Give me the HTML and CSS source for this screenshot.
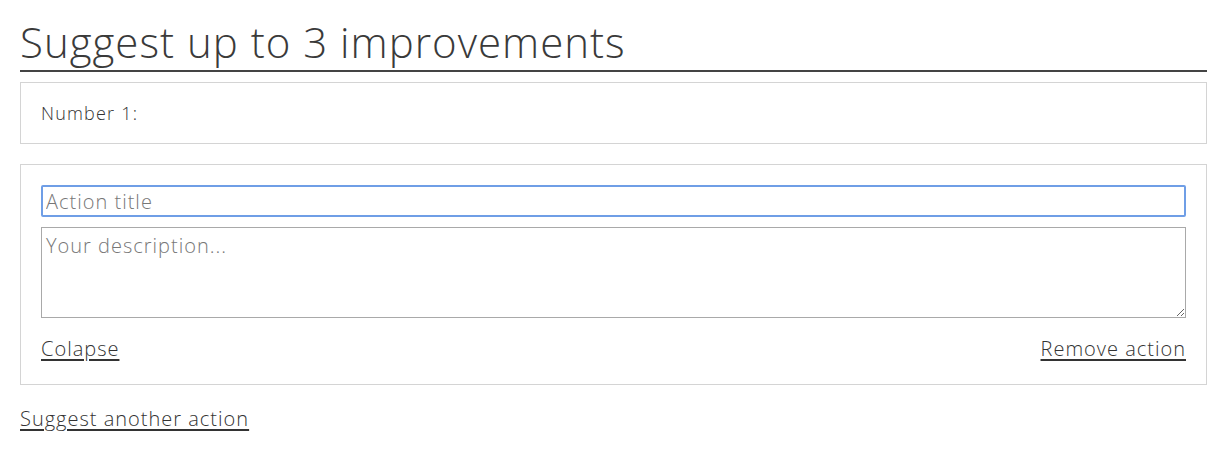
FILE: index.html
```html
<!DOCTYPE html>
<html lang="en">
<head>
<meta charset="utf-8">
<title>Suggest improvements</title>
<link rel="stylesheet" href="styles.css">
</head>
<body>
<main class="page">
  <h1 class="title">Suggest up to 3 improvements</h1>
  <section class="box number-box">
    <span class="number-label">Number 1:</span>
  </section>
  <section class="box action-box">
    <input class="action-title" type="text" placeholder="Action title" autofocus>
    <textarea class="action-desc" placeholder="Your description..."></textarea>
    <div class="action-links">
      <a href="#" class="link">Colapse</a>
      <a href="#" class="link">Remove action</a>
    </div>
  </section>
  <a href="#" class="link suggest-link">Suggest another action</a>
</main>
</body>
</html>
```

FILE: styles.css
```css
* { box-sizing: border-box; }
html, body { margin: 0; padding: 0; background: #fff; }
body {
  font-family: "Open Sans", "Liberation Sans", sans-serif;
  color: #444;
}
.page {
  padding: 0 21px 0 20px;
  display: flex;
  flex-direction: column;
  align-items: stretch;
}
.title {
  margin: 14px 0 0;
  font-size: 42px;
  font-weight: 300;
  line-height: 56px;
  color: #3a3a3a;
  border-bottom: 2px solid #444;
  padding-bottom: 0;
  letter-spacing: 1px;
}
.box {
  border: 1px solid #d4d4d4;
  padding: 20px;
}
.number-box {
  margin-top: 10px;
  height: 62px;
  display: flex;
  align-items: center;
}
.number-label {
  font-size: 18px;
  font-weight: 300;
  color: #333;
  letter-spacing: 1.2px;
}
.action-box {
  margin-top: 20px;
  padding-bottom: 22px;
  display: flex;
  flex-direction: column;
}
.action-title {
  height: 32px;
  border: 2px solid #6f9ee6;
  border-radius: 2px;
  outline: none;
  padding: 0 3px;
  font: 300 20px "Open Sans", "Liberation Sans", sans-serif;
  letter-spacing: 1px;
  color: #333;
}
.action-title::placeholder { color: #777; }
.action-desc {
  margin-top: 10px;
  height: 91px;
  border: 1px solid #a9a9a9;
  padding: 4px 4px;
  font: 300 20px "Open Sans", "Liberation Sans", sans-serif;
  letter-spacing: 1px;
  resize: vertical;
  color: #333;
}
.action-desc::placeholder { color: #777; }
.action-links {
  margin-top: 17px;
  display: flex;
  justify-content: space-between;
  line-height: 27px;
}
.link {
  color: #333;
  font-size: 20px;
  font-weight: 300;
  letter-spacing: 1px;
  text-decoration: underline;
  text-underline-offset: 3px;
}
.suggest-link {
  margin-top: 20px;
  align-self: flex-start;
  line-height: 27px;
}
```
